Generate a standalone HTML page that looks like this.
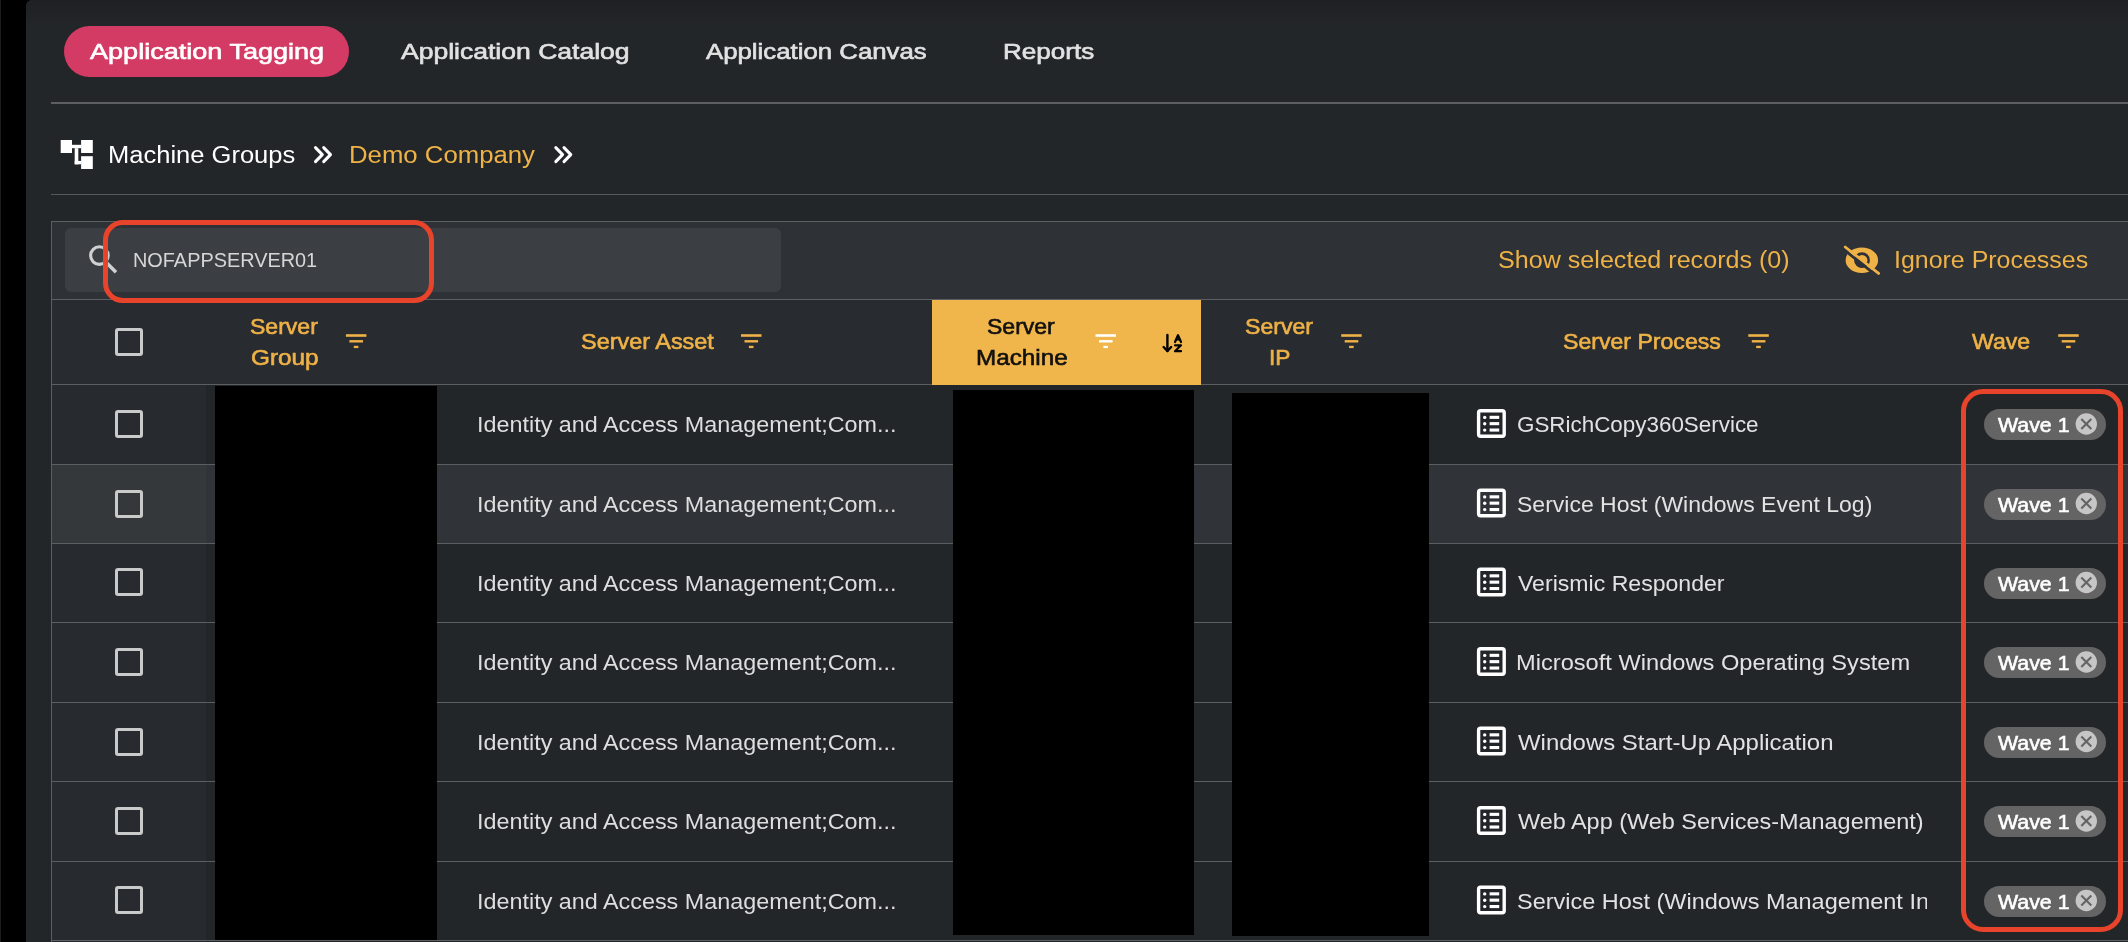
<!DOCTYPE html>
<html><head><meta charset="utf-8"><style>
html,body{margin:0;padding:0;width:2128px;height:942px;overflow:hidden;background:#000;position:relative}
body{font-family:'Liberation Sans',sans-serif}
.a{position:absolute}
.t{position:absolute;white-space:nowrap;line-height:1;transform-origin:0 0}

</style></head><body>
<div class="a" style="left:0;top:0;width:1px;height:942px;background:#1c1c1c"></div>
<div class="a" style="left:26px;top:0;width:2102px;height:942px;background:#232629;border-top-left-radius:6px"></div>
<div class="a" style="left:26px;top:0;width:2102px;height:26px;background:linear-gradient(#1e2023,#232629);border-top-left-radius:6px"></div>
<div class="a" style="left:64px;top:26px;width:285px;height:51px;background:#D33B64;border-radius:26px"></div>
<div class="a" style="left:51px;top:102px;width:2077px;height:2px;background:#5d5e62"></div>
<svg class="a" style="left:0;top:0;overflow:visible" width="1" height="1"><g fill="#fff"><rect x="60.7" y="140" width="11.3" height="13"/><rect x="81.1" y="140" width="11.7" height="13"/><rect x="72" y="144.8" width="9.1" height="3.4"/><rect x="74.7" y="148.2" width="3.6" height="16.1"/><rect x="74.7" y="160.9" width="6.4" height="3.4"/><rect x="81.1" y="156.2" width="11.7" height="12.8"/></g></svg>
<svg class="a" style="left:0;top:0;overflow:visible" width="1" height="1"><g fill="none" stroke="#fff" stroke-width="3" stroke-linecap="round" stroke-linejoin="round"><polyline points="315.5,147.6 322.3,154.6 315.5,161.6"/><polyline points="323.7,147.6 330.5,154.6 323.7,161.6"/></g></svg>
<svg class="a" style="left:0;top:0;overflow:visible" width="1" height="1"><g fill="none" stroke="#fff" stroke-width="3" stroke-linecap="round" stroke-linejoin="round"><polyline points="555.8,147.6 562.5999999999999,154.6 555.8,161.6"/><polyline points="564.0,147.6 570.8,154.6 564.0,161.6"/></g></svg>
<div class="a" style="left:51px;top:194px;width:2077px;height:1px;background:#56585c"></div>
<div class="a" style="left:51px;top:221px;width:2077px;height:721px;background:#232629;border-top:1px solid #5c5e62;border-left:1px solid #5c5e62;box-sizing:border-box"></div>
<div class="a" style="left:52px;top:222px;width:2076px;height:77px;background:#2e3135"></div>
<div class="a" style="left:65px;top:228px;width:716px;height:64px;background:#3b3f43;border-radius:6px"></div>
<svg class="a" style="left:0;top:0;overflow:visible" width="1" height="1"><g fill="none" stroke="#cfd0d1"><circle cx="99.4" cy="255.6" r="8.8" stroke-width="3.1"/><line x1="106" y1="262.2" x2="116" y2="272.2" stroke-width="3.6"/></g></svg>
<div class="a" style="left:52px;top:299px;width:2076px;height:1px;background:#5c5e62"></div>
<div class="a" style="left:52px;top:300px;width:2076px;height:84px;background:#282b2f"></div>
<div class="a" style="left:52px;top:385px;width:154px;height:557px;background:#272a2e"></div>
<div class="a" style="left:52px;top:465px;width:2076px;height:78px;background:#303337"></div>
<div class="a" style="left:52px;top:465px;width:154px;height:78px;background:#35383b"></div>
<div class="a" style="left:52px;top:384px;width:2076px;height:1px;background:#5c5e62"></div>
<div class="a" style="left:52px;top:464px;width:2076px;height:1px;background:#5c5e62"></div>
<div class="a" style="left:52px;top:543px;width:2076px;height:1px;background:#5c5e62"></div>
<div class="a" style="left:52px;top:622px;width:2076px;height:1px;background:#5c5e62"></div>
<div class="a" style="left:52px;top:702px;width:2076px;height:1px;background:#5c5e62"></div>
<div class="a" style="left:52px;top:781px;width:2076px;height:1px;background:#5c5e62"></div>
<div class="a" style="left:52px;top:861px;width:2076px;height:1px;background:#5c5e62"></div>
<div class="a" style="left:52px;top:940px;width:2076px;height:1px;background:#5c5e62"></div>
<div class="a" style="left:932px;top:300px;width:269px;height:85px;background:#F0B54B"></div>
<svg class="a" style="left:0;top:0;overflow:visible" width="1" height="1"><g fill="#EFB247"><rect x="345.9" y="334.2" width="20.5" height="2.6"/><rect x="349.4" y="340.1" width="13.6" height="2.4"/><rect x="353.79999999999995" y="345.8" width="4.6" height="2.3"/></g></svg>
<svg class="a" style="left:0;top:0;overflow:visible" width="1" height="1"><g fill="#EFB247"><rect x="741" y="334.2" width="20.5" height="2.6"/><rect x="744.5" y="340.1" width="13.6" height="2.4"/><rect x="748.9" y="345.8" width="4.6" height="2.3"/></g></svg>
<svg class="a" style="left:0;top:0;overflow:visible" width="1" height="1"><g fill="#ffffff"><rect x="1095.5" y="334.2" width="20.5" height="2.6"/><rect x="1099.0" y="340.1" width="13.6" height="2.4"/><rect x="1103.4" y="345.8" width="4.6" height="2.3"/></g></svg>
<svg class="a" style="left:0;top:0;overflow:visible" width="1" height="1"><g fill="#EFB247"><rect x="1341.2" y="334.2" width="20.5" height="2.6"/><rect x="1344.7" y="340.1" width="13.6" height="2.4"/><rect x="1349.1000000000001" y="345.8" width="4.6" height="2.3"/></g></svg>
<svg class="a" style="left:0;top:0;overflow:visible" width="1" height="1"><g fill="#EFB247"><rect x="1748.3" y="334.2" width="20.5" height="2.6"/><rect x="1751.8" y="340.1" width="13.6" height="2.4"/><rect x="1756.2" y="345.8" width="4.6" height="2.3"/></g></svg>
<svg class="a" style="left:0;top:0;overflow:visible" width="1" height="1"><g fill="#EFB247"><rect x="2058.2" y="334.2" width="20.5" height="2.6"/><rect x="2061.7" y="340.1" width="13.6" height="2.4"/><rect x="2066.1" y="345.8" width="4.6" height="2.3"/></g></svg>
<svg class="a" style="left:0;top:0;overflow:visible" width="1" height="1"><g fill="none" stroke="#000" stroke-width="2.4" stroke-linecap="round" stroke-linejoin="round"><line x1="1167.4" y1="335" x2="1167.4" y2="351"/><polyline points="1163.6,347 1167.4,351 1171.2,347"/><polyline points="1175,342 1178,335.2 1181,342" stroke-width="2.2"/><line x1="1176" y1="339.6" x2="1180" y2="339.6" stroke-width="1.6"/><polyline points="1175,345.3 1181,345.3 1175,351.2 1181,351.2" stroke-width="2.2"/></g></svg>
<svg class="a" style="left:0;top:0;overflow:visible" width="1" height="1"><defs><mask id="em" maskUnits="userSpaceOnUse" x="1830" y="235" width="60" height="50"><rect x="1830" y="235" width="60" height="50" fill="#fff"/><line x1="1839.48" y1="246.17" x2="1880.72" y2="278.78" stroke="#000" stroke-width="2.8"/></mask><clipPath id="ec"><polygon points="1798.13,209.79 1925.67,310.61 1962.88,263.53 1835.33,162.72"/></clipPath></defs><g mask="url(#em)"><path fill="#EFB247" fill-rule="evenodd" d="M1845.6,260.15 A16.25,12.75 0 1,0 1878.1,260.15 A16.25,12.75 0 1,0 1845.6,260.15 Z M1854.1,260.15 A7.9,7.9 0 1,0 1869.9,260.15 A7.9,7.9 0 1,0 1854.1,260.15 Z"/><circle cx="1862" cy="260.3" r="5.4" fill="#EFB247" clip-path="url(#ec)"/></g><line x1="1845.2" y1="247.0" x2="1878.6" y2="273.4" stroke="#EFB247" stroke-width="2.8" stroke-linecap="round"/></svg>
<div class="a" style="left:115px;top:328px;width:28px;height:28px;border:3px solid #c9caca;border-radius:3px;box-sizing:border-box"></div>
<div class="a" style="left:115px;top:410px;width:28px;height:28px;border:3px solid #c9caca;border-radius:3px;box-sizing:border-box"></div>
<div class="a" style="left:115px;top:490px;width:28px;height:28px;border:3px solid #c9caca;border-radius:3px;box-sizing:border-box"></div>
<div class="a" style="left:115px;top:568px;width:28px;height:28px;border:3px solid #c9caca;border-radius:3px;box-sizing:border-box"></div>
<div class="a" style="left:115px;top:648px;width:28px;height:28px;border:3px solid #c9caca;border-radius:3px;box-sizing:border-box"></div>
<div class="a" style="left:115px;top:728px;width:28px;height:28px;border:3px solid #c9caca;border-radius:3px;box-sizing:border-box"></div>
<div class="a" style="left:115px;top:807px;width:28px;height:28px;border:3px solid #c9caca;border-radius:3px;box-sizing:border-box"></div>
<div class="a" style="left:115px;top:886px;width:28px;height:28px;border:3px solid #c9caca;border-radius:3px;box-sizing:border-box"></div>
<div class="a" style="left:215px;top:386px;width:222px;height:554px;background:#000"></div>
<div class="a" style="left:953px;top:390px;width:241px;height:545px;background:#000"></div>
<div class="a" style="left:1232px;top:393px;width:197px;height:543px;background:#000"></div>
<svg class="a" style="left:0;top:0;overflow:visible" width="1" height="1"><g fill="#fff"><rect x="1478.6000000000001" y="410.8" width="25.6" height="25.4" rx="2" fill="none" stroke="#fff" stroke-width="3.4"/><circle cx="1484.7" cy="417.4" r="1.7"/><circle cx="1484.7" cy="423.7" r="1.7"/><circle cx="1484.7" cy="430.1" r="1.7"/><rect x="1489.6" y="415.8" width="9.6" height="3.1"/><rect x="1489.6" y="422.1" width="9.6" height="3.1"/><rect x="1489.6" y="428.5" width="9.6" height="3.1"/></g></svg>
<div class="a" style="left:1984px;top:409.0px;width:122px;height:31px;background:#646464;border-radius:16px"></div>
<svg class="a" style="left:0;top:0;overflow:visible" width="1" height="1"><circle cx="2086.3" cy="424.0" r="10.7" fill="#c6c6c6"/><g stroke="#646464" stroke-width="2.1"><line x1="2081.3" y1="419.0" x2="2091.3" y2="429.0"/><line x1="2091.3" y1="419.0" x2="2081.3" y2="429.0"/></g></svg>
<svg class="a" style="left:0;top:0;overflow:visible" width="1" height="1"><g fill="#fff"><rect x="1478.6000000000001" y="490.3" width="25.6" height="25.4" rx="2" fill="none" stroke="#fff" stroke-width="3.4"/><circle cx="1484.7" cy="496.9" r="1.7"/><circle cx="1484.7" cy="503.2" r="1.7"/><circle cx="1484.7" cy="509.6" r="1.7"/><rect x="1489.6" y="495.3" width="9.6" height="3.1"/><rect x="1489.6" y="501.6" width="9.6" height="3.1"/><rect x="1489.6" y="508.0" width="9.6" height="3.1"/></g></svg>
<div class="a" style="left:1984px;top:488.5px;width:122px;height:31px;background:#646464;border-radius:16px"></div>
<svg class="a" style="left:0;top:0;overflow:visible" width="1" height="1"><circle cx="2086.3" cy="503.5" r="10.7" fill="#c6c6c6"/><g stroke="#646464" stroke-width="2.1"><line x1="2081.3" y1="498.5" x2="2091.3" y2="508.5"/><line x1="2091.3" y1="498.5" x2="2081.3" y2="508.5"/></g></svg>
<svg class="a" style="left:0;top:0;overflow:visible" width="1" height="1"><g fill="#fff"><rect x="1478.6000000000001" y="569.3000000000001" width="25.6" height="25.4" rx="2" fill="none" stroke="#fff" stroke-width="3.4"/><circle cx="1484.7" cy="575.9" r="1.7"/><circle cx="1484.7" cy="582.2" r="1.7"/><circle cx="1484.7" cy="588.6" r="1.7"/><rect x="1489.6" y="574.3" width="9.6" height="3.1"/><rect x="1489.6" y="580.6" width="9.6" height="3.1"/><rect x="1489.6" y="587.0" width="9.6" height="3.1"/></g></svg>
<div class="a" style="left:1984px;top:567.5px;width:122px;height:31px;background:#646464;border-radius:16px"></div>
<svg class="a" style="left:0;top:0;overflow:visible" width="1" height="1"><circle cx="2086.3" cy="582.5" r="10.7" fill="#c6c6c6"/><g stroke="#646464" stroke-width="2.1"><line x1="2081.3" y1="577.5" x2="2091.3" y2="587.5"/><line x1="2091.3" y1="577.5" x2="2081.3" y2="587.5"/></g></svg>
<svg class="a" style="left:0;top:0;overflow:visible" width="1" height="1"><g fill="#fff"><rect x="1478.6000000000001" y="648.8000000000001" width="25.6" height="25.4" rx="2" fill="none" stroke="#fff" stroke-width="3.4"/><circle cx="1484.7" cy="655.4" r="1.7"/><circle cx="1484.7" cy="661.7" r="1.7"/><circle cx="1484.7" cy="668.1" r="1.7"/><rect x="1489.6" y="653.8" width="9.6" height="3.1"/><rect x="1489.6" y="660.1" width="9.6" height="3.1"/><rect x="1489.6" y="666.5" width="9.6" height="3.1"/></g></svg>
<div class="a" style="left:1984px;top:647.0px;width:122px;height:31px;background:#646464;border-radius:16px"></div>
<svg class="a" style="left:0;top:0;overflow:visible" width="1" height="1"><circle cx="2086.3" cy="662.0" r="10.7" fill="#c6c6c6"/><g stroke="#646464" stroke-width="2.1"><line x1="2081.3" y1="657.0" x2="2091.3" y2="667.0"/><line x1="2091.3" y1="657.0" x2="2081.3" y2="667.0"/></g></svg>
<svg class="a" style="left:0;top:0;overflow:visible" width="1" height="1"><g fill="#fff"><rect x="1478.6000000000001" y="728.3000000000001" width="25.6" height="25.4" rx="2" fill="none" stroke="#fff" stroke-width="3.4"/><circle cx="1484.7" cy="734.9" r="1.7"/><circle cx="1484.7" cy="741.2" r="1.7"/><circle cx="1484.7" cy="747.6" r="1.7"/><rect x="1489.6" y="733.3" width="9.6" height="3.1"/><rect x="1489.6" y="739.6" width="9.6" height="3.1"/><rect x="1489.6" y="746.0" width="9.6" height="3.1"/></g></svg>
<div class="a" style="left:1984px;top:726.5px;width:122px;height:31px;background:#646464;border-radius:16px"></div>
<svg class="a" style="left:0;top:0;overflow:visible" width="1" height="1"><circle cx="2086.3" cy="741.5" r="10.7" fill="#c6c6c6"/><g stroke="#646464" stroke-width="2.1"><line x1="2081.3" y1="736.5" x2="2091.3" y2="746.5"/><line x1="2091.3" y1="736.5" x2="2081.3" y2="746.5"/></g></svg>
<svg class="a" style="left:0;top:0;overflow:visible" width="1" height="1"><g fill="#fff"><rect x="1478.6000000000001" y="807.8000000000001" width="25.6" height="25.4" rx="2" fill="none" stroke="#fff" stroke-width="3.4"/><circle cx="1484.7" cy="814.4" r="1.7"/><circle cx="1484.7" cy="820.7" r="1.7"/><circle cx="1484.7" cy="827.1" r="1.7"/><rect x="1489.6" y="812.8" width="9.6" height="3.1"/><rect x="1489.6" y="819.1" width="9.6" height="3.1"/><rect x="1489.6" y="825.5" width="9.6" height="3.1"/></g></svg>
<div class="a" style="left:1984px;top:806.0px;width:122px;height:31px;background:#646464;border-radius:16px"></div>
<svg class="a" style="left:0;top:0;overflow:visible" width="1" height="1"><circle cx="2086.3" cy="821.0" r="10.7" fill="#c6c6c6"/><g stroke="#646464" stroke-width="2.1"><line x1="2081.3" y1="816.0" x2="2091.3" y2="826.0"/><line x1="2091.3" y1="816.0" x2="2081.3" y2="826.0"/></g></svg>
<svg class="a" style="left:0;top:0;overflow:visible" width="1" height="1"><g fill="#fff"><rect x="1478.6000000000001" y="887.3000000000001" width="25.6" height="25.4" rx="2" fill="none" stroke="#fff" stroke-width="3.4"/><circle cx="1484.7" cy="893.9" r="1.7"/><circle cx="1484.7" cy="900.2" r="1.7"/><circle cx="1484.7" cy="906.6" r="1.7"/><rect x="1489.6" y="892.3" width="9.6" height="3.1"/><rect x="1489.6" y="898.6" width="9.6" height="3.1"/><rect x="1489.6" y="905.0" width="9.6" height="3.1"/></g></svg>
<div class="a" style="left:1984px;top:885.5px;width:122px;height:31px;background:#646464;border-radius:16px"></div>
<svg class="a" style="left:0;top:0;overflow:visible" width="1" height="1"><circle cx="2086.3" cy="900.5" r="10.7" fill="#c6c6c6"/><g stroke="#646464" stroke-width="2.1"><line x1="2081.3" y1="895.5" x2="2091.3" y2="905.5"/><line x1="2091.3" y1="895.5" x2="2081.3" y2="905.5"/></g></svg>
<div class="t" style="left:89.80px;top:42.00px;font-size:21.5px;line-height:21.5px;font-weight:400;-webkit-text-stroke:0.6px currentColor;color:#ffffff;transform:scaleX(1.2584)">Application Tagging</div>
<div class="t" style="left:400.80px;top:42.00px;font-size:21.5px;line-height:21.5px;font-weight:400;-webkit-text-stroke:0.6px currentColor;color:#e2e2e2;transform:scaleX(1.2337)">Application Catalog</div>
<div class="t" style="left:705.60px;top:42.00px;font-size:21.5px;line-height:21.5px;font-weight:400;-webkit-text-stroke:0.6px currentColor;color:#e2e2e2;transform:scaleX(1.1989)">Application Canvas</div>
<div class="t" style="left:1003.49px;top:42.00px;font-size:21.5px;line-height:21.5px;font-weight:400;-webkit-text-stroke:0.6px currentColor;color:#e2e2e2;transform:scaleX(1.2108)">Reports</div>
<div class="t" style="left:107.78px;top:144.00px;font-size:23px;line-height:23px;font-weight:400;color:#ffffff;transform:scaleX(1.1096)">Machine Groups</div>
<div class="t" style="left:348.96px;top:144.00px;font-size:23px;line-height:23px;font-weight:400;color:#EFB247;transform:scaleX(1.1189)">Demo Company</div>
<div class="t" style="left:132.98px;top:251.00px;font-size:19.5px;line-height:19.5px;font-weight:400;color:#d6d6d6;transform:scaleX(1.0196)">NOFAPPSERVER01</div>
<div class="t" style="left:1497.81px;top:249.00px;font-size:23px;line-height:23px;font-weight:400;color:#EFB247;transform:scaleX(1.0917)">Show selected records (0)</div>
<div class="t" style="left:1894.43px;top:249.00px;font-size:23px;line-height:23px;font-weight:400;color:#EFB247;transform:scaleX(1.0847)">Ignore Processes</div>
<div class="t" style="left:249.93px;top:317.00px;font-size:21.5px;line-height:21.5px;font-weight:400;-webkit-text-stroke:0.6px currentColor;color:#EFB247;transform:scaleX(1.0714)">Server</div>
<div class="t" style="left:250.87px;top:348.00px;font-size:21.5px;line-height:21.5px;font-weight:400;-webkit-text-stroke:0.6px currentColor;color:#EFB247;transform:scaleX(1.1310)">Group</div>
<div class="t" style="left:580.51px;top:332.00px;font-size:21.5px;line-height:21.5px;font-weight:400;-webkit-text-stroke:0.6px currentColor;color:#EFB247;transform:scaleX(1.0901)">Server Asset</div>
<div class="t" style="left:987.13px;top:317.00px;font-size:21.5px;line-height:21.5px;font-weight:400;-webkit-text-stroke:0.6px currentColor;color:#111111;transform:scaleX(1.0698)">Server</div>
<div class="t" style="left:976.17px;top:348.00px;font-size:21.5px;line-height:21.5px;font-weight:400;-webkit-text-stroke:0.6px currentColor;color:#111111;transform:scaleX(1.1275)">Machine</div>
<div class="t" style="left:1244.83px;top:317.00px;font-size:21.5px;line-height:21.5px;font-weight:400;-webkit-text-stroke:0.6px currentColor;color:#EFB247;transform:scaleX(1.0730)">Server</div>
<div class="t" style="left:1268.84px;top:348.00px;font-size:21.5px;line-height:21.5px;font-weight:400;-webkit-text-stroke:0.6px currentColor;color:#EFB247;transform:scaleX(1.0579)">IP</div>
<div class="t" style="left:1563.13px;top:332.00px;font-size:21.5px;line-height:21.5px;font-weight:400;-webkit-text-stroke:0.6px currentColor;color:#EFB247;transform:scaleX(1.0740)">Server Process</div>
<div class="t" style="left:1971.80px;top:332.00px;font-size:21.5px;line-height:21.5px;font-weight:400;-webkit-text-stroke:0.6px currentColor;color:#EFB247;transform:scaleX(1.0741)">Wave</div>
<div class="t" style="left:476.68px;top:414.00px;font-size:22px;line-height:22px;font-weight:400;color:#dedede;transform:scaleX(1.0619)">Identity and Access Management;Com...</div>
<div class="t" style="left:1516.68px;top:414.00px;font-size:22px;line-height:22px;font-weight:400;color:#e2e2e2;transform:scaleX(1.0183)">GSRichCopy360Service</div>
<div class="t" style="left:1998.30px;top:414.00px;font-size:21px;line-height:21px;font-weight:400;-webkit-text-stroke:0.6px currentColor;color:#ffffff;transform:scaleX(1.0157)">Wave 1</div>
<div class="t" style="left:476.68px;top:493.50px;font-size:22px;line-height:22px;font-weight:400;color:#dedede;transform:scaleX(1.0619)">Identity and Access Management;Com...</div>
<div class="t" style="left:1516.65px;top:493.50px;font-size:22px;line-height:22px;font-weight:400;color:#e2e2e2;transform:scaleX(1.0453)">Service Host (Windows Event Log)</div>
<div class="t" style="left:1998.30px;top:493.50px;font-size:21px;line-height:21px;font-weight:400;-webkit-text-stroke:0.6px currentColor;color:#ffffff;transform:scaleX(1.0157)">Wave 1</div>
<div class="t" style="left:476.68px;top:572.50px;font-size:22px;line-height:22px;font-weight:400;color:#dedede;transform:scaleX(1.0619)">Identity and Access Management;Com...</div>
<div class="t" style="left:1517.70px;top:572.50px;font-size:22px;line-height:22px;font-weight:400;color:#e2e2e2;transform:scaleX(1.0492)">Verismic Responder</div>
<div class="t" style="left:1998.30px;top:572.50px;font-size:21px;line-height:21px;font-weight:400;-webkit-text-stroke:0.6px currentColor;color:#ffffff;transform:scaleX(1.0157)">Wave 1</div>
<div class="t" style="left:476.68px;top:652.00px;font-size:22px;line-height:22px;font-weight:400;color:#dedede;transform:scaleX(1.0619)">Identity and Access Management;Com...</div>
<div class="t" style="left:1515.55px;top:652.00px;font-size:22px;line-height:22px;font-weight:400;color:#e2e2e2;transform:scaleX(1.0747)">Microsoft Windows Operating System</div>
<div class="t" style="left:1998.30px;top:652.00px;font-size:21px;line-height:21px;font-weight:400;-webkit-text-stroke:0.6px currentColor;color:#ffffff;transform:scaleX(1.0157)">Wave 1</div>
<div class="t" style="left:476.68px;top:731.50px;font-size:22px;line-height:22px;font-weight:400;color:#dedede;transform:scaleX(1.0619)">Identity and Access Management;Com...</div>
<div class="t" style="left:1517.70px;top:731.50px;font-size:22px;line-height:22px;font-weight:400;color:#e2e2e2;transform:scaleX(1.0886)">Windows Start-Up Application</div>
<div class="t" style="left:1998.30px;top:731.50px;font-size:21px;line-height:21px;font-weight:400;-webkit-text-stroke:0.6px currentColor;color:#ffffff;transform:scaleX(1.0157)">Wave 1</div>
<div class="t" style="left:476.68px;top:811.00px;font-size:22px;line-height:22px;font-weight:400;color:#dedede;transform:scaleX(1.0619)">Identity and Access Management;Com...</div>
<div class="t" style="left:1517.70px;top:811.00px;font-size:22px;line-height:22px;font-weight:400;color:#e2e2e2;transform:scaleX(1.0654)">Web App (Web Services-Management)</div>
<div class="t" style="left:1998.30px;top:811.00px;font-size:21px;line-height:21px;font-weight:400;-webkit-text-stroke:0.6px currentColor;color:#ffffff;transform:scaleX(1.0157)">Wave 1</div>
<div class="t" style="left:476.68px;top:890.50px;font-size:22px;line-height:22px;font-weight:400;color:#dedede;transform:scaleX(1.0619)">Identity and Access Management;Com...</div>
<div style="position:absolute;left:0;top:0;width:1926.5px;height:942px;overflow:hidden"><div class="t" style="left:1516.63px;top:890.50px;font-size:22px;line-height:22px;font-weight:400;color:#e2e2e2;transform:scaleX(1.0662)">Service Host (Windows Management Instrumentation)</div></div>
<div class="t" style="left:1998.30px;top:890.50px;font-size:21px;line-height:21px;font-weight:400;-webkit-text-stroke:0.6px currentColor;color:#ffffff;transform:scaleX(1.0157)">Wave 1</div>
<div class="a" style="left:103.4px;top:220.2px;width:330.2px;height:82.6px;border:5.7px solid #E8432B;border-radius:20px;box-sizing:border-box"></div>
<div class="a" style="left:1961.2px;top:389px;width:161.6px;height:543.4px;border:5.7px solid #E8432B;border-radius:22px;box-sizing:border-box"></div>
</body></html>
